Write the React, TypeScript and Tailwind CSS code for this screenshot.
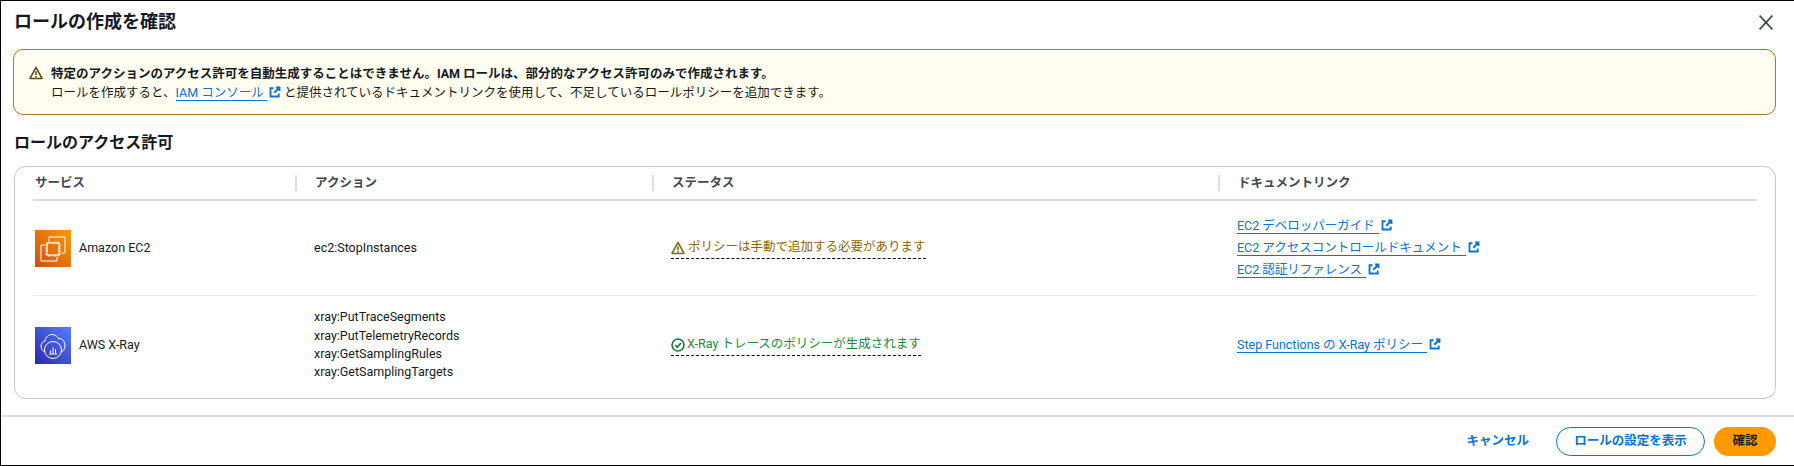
const font = '"Roboto", "Noto Sans CJK JP", sans-serif';
const cols = "grid grid-cols-[262px_357px_566px_1fr]";

function Ext() {
  return (
    <svg viewBox="0 0 16 16" className="w-[12px] h-[12px] inline-block ml-[2px] align-[-1px] shrink-0" fill="none" stroke="#0972d3" strokeWidth="2.4">
      <path d="M9.500 2H14v4.500M14 2 7 9M6 3H2v11h11v-4" />
    </svg>
  );
}

function DocLink({ text }: { text: string }) {
  return (
    <div className="h-[22px] leading-[20px] whitespace-nowrap">
      <a className="text-[#0972d3] border-b border-[#0972d3] pr-[4px]">{text}</a>
      <Ext />
    </div>
  );
}

function Warn({ color, size = 14 }: { color: string; size?: number }) {
  return (
    <svg viewBox="0 0 16 16" width={size} height={size} fill="none" stroke={color} strokeWidth="1.8" className="shrink-0">
      <path d="M8 1.600 1.200 14.200h13.600Z" strokeLinejoin="round" />
      <path d="M8 6v4.200M8 11.400v1.600" />
    </svg>
  );
}

function Ec2Icon() {
  return (
    <svg viewBox="0 0 36 37" className="w-[36px] h-[37px] shrink-0">
      <defs>
        <linearGradient id="ec2g" x1="0" y1="1" x2="1" y2="0">
          <stop offset="0" stopColor="#c8511b" />
          <stop offset="1" stopColor="#ff9900" />
        </linearGradient>
      </defs>
      <rect width="36" height="37" fill="url(#ec2g)" />
      <g fill="none" stroke="#fff" strokeWidth="1">
        <path d="M14 11V7h16v16h-4" />
        <path d="M10 15H6v16h16v-4" />
        <rect x="12" y="13" width="12" height="12" strokeWidth="1.200" />
        <path d="M14 11v2M17 11v2M20 11v2M23 11v2M14 25v2M17 25v2M20 25v2M23 25v2M10 15h2M10 18h2M10 21h2M10 24h2M24 15h2M24 18h2M24 21h2M24 24h2" strokeWidth=".8" />
      </g>
    </svg>
  );
}

function XRayIcon() {
  return (
    <svg viewBox="0 0 36 37" className="w-[36px] h-[37px] shrink-0">
      <defs>
        <linearGradient id="xg" x1="0" y1="1" x2="1" y2="0">
          <stop offset="0" stopColor="#2e27ad" />
          <stop offset="1" stopColor="#527fff" />
        </linearGradient>
      </defs>
      <rect width="36" height="37" fill="url(#xg)" />
      <g fill="none" stroke="#fff" strokeWidth="1">
        <path d="M10 24.500H9.500C7.500 24 6 21.500 6 19c0-2.600 1.800-4.500 4-4.800C10.500 10 13.500 7.500 17 7.500c3 0 5.500 1.700 6.700 4.400C24.500 11.500 25.500 11.500 26.500 12 28.500 13 30 16 30 19c0 2.500-1.500 5-3.500 5.500H26" />
        <circle cx="18" cy="23" r="8.500" />
        <path d="M14 27h8M15.500 26.500v-3M18 26.500v-6M20.500 26.500v-4.500" />
      </g>
    </svg>
  );
}

export default function App() {
  return (
    <div className="w-[1794px] h-[466px] bg-white border-t border-l border-b border-black flex flex-col overflow-hidden text-[12.5px] text-[#16191f]" style={{ fontFamily: font }}>
      <div className="h-[42px] flex items-center justify-between pl-[13px] pr-[21px] shrink-0">
        <h1 className="text-[18px] font-bold leading-[24px]">ロールの作成を確認</h1>
        <svg viewBox="0 0 14 15" className="w-[14px] h-[15px]" fill="none" stroke="#414750" strokeWidth="1.600"><path d="M.6.6l12.800 13.800M13.400.6.6 14.400" /></svg>
      </div>
      <div className="ml-[12px] mr-[18px] mt-[6px] h-[66px] shrink-0 rounded-[10px] border border-[#a67c1e] bg-[#fffef0] pl-[15px] flex items-start pt-[14px]">
        <div className="mt-[2px] mr-[8px]"><Warn color="#5f4a12" /></div>
        <div className="leading-[19px]">
          <div className="font-bold">特定のアクションのアクセス許可を自動生成することはできません。IAM ロールは、部分的なアクセス許可のみで作成されます。</div>
          <div>
            ロールを作成すると、<a className="text-[#0972d3] border-b border-[#0972d3]">IAM コンソール </a><Ext /> と提供されているドキュメントリンクを使用して、不足しているロールポリシーを追加できます。
          </div>
        </div>
      </div>
      <h2 className="ml-[13px] mt-[16px] h-[24px] leading-[24px] text-[16px] font-bold shrink-0">ロールのアクセス許可</h2>
      <div className="ml-[13px] mr-[18px] mt-[11px] h-[233px] shrink-0 rounded-[12px] border border-[#c6c6cd] px-[18px]">
        <div className={`${cols} h-[34px] border-b-2 border-[#dcdce3] font-bold text-[#414750] items-center`}>
          <div className="pl-[2px]">サービス</div>
          <div className="border-l-2 border-[#dcdce3] pl-[18px] h-[16px] leading-[16px]">アクション</div>
          <div className="border-l-2 border-[#dcdce3] pl-[18px] h-[16px] leading-[16px]">ステータス</div>
          <div className="border-l-2 border-[#dcdce3] pl-[18px] h-[16px] leading-[16px]">ドキュメントリンク</div>
        </div>
        <div className={`${cols} h-[95px] border-b border-[#eaeded] items-center`}>
          <div className="pl-[2px] flex items-center gap-[8px]"><Ec2Icon /><span>Amazon EC2</span></div>
          <div className="pl-[19px]">ec2:StopInstances</div>
          <div className="pl-[19px] flex">
            <span className="inline-flex items-center gap-[3px] text-[#8d6605] border-b border-dashed border-black h-[22px]"><Warn color="#8d6605" />ポリシーは手動で追加する必要があります</span>
          </div>
          <div className="pl-[19px] pt-[2px]">
            <DocLink text="EC2 デベロッパーガイド" />
            <DocLink text="EC2 アクセスコントロールドキュメント" />
            <DocLink text="EC2 認証リファレンス" />
          </div>
        </div>
        <div className={`${cols} h-[98px] items-center`}>
          <div className="pl-[2px] flex items-center gap-[8px]"><XRayIcon /><span>AWS X-Ray</span></div>
          <div className="pl-[19px] leading-[18.400px]">
            <div>xray:PutTraceSegments</div>
            <div>xray:PutTelemetryRecords</div>
            <div>xray:GetSamplingRules</div>
            <div>xray:GetSamplingTargets</div>
          </div>
          <div className="pl-[19px] flex">
            <span className="inline-flex items-center gap-[2px] text-[#1a8a3c] border-b border-dashed border-black h-[22px]">
              <svg viewBox="0 0 16 16" width="14" height="14" fill="none" stroke="#0f7a34" strokeWidth="1.800" className="shrink-0"><circle cx="8" cy="8" r="6.800" /><path d="M4.800 8.200 7.200 10.600 11.400 5.800" /></svg>
              X-Ray トレースのポリシーが生成されます
            </span>
          </div>
          <div className="pl-[19px] pt-[2px]"><DocLink text="Step Functions の X-Ray ポリシー" /></div>
        </div>
      </div>
      <div className="mt-[16px] flex-1 border-t-2 border-[#dcdce3] flex items-center justify-end pr-[18px] font-bold text-[#0972d3]">
        <span className="mr-[27px]">キャンセル</span>
        <span className="h-[29px] w-[149px] rounded-full border border-[#0972d3] flex items-center justify-center mr-[9px]">ロールの設定を表示</span>
        <span className="h-[29px] w-[62px] rounded-full bg-[#ff9900] text-[#16191f] flex items-center justify-center">確認</span>
      </div>
    </div>
  );
}
